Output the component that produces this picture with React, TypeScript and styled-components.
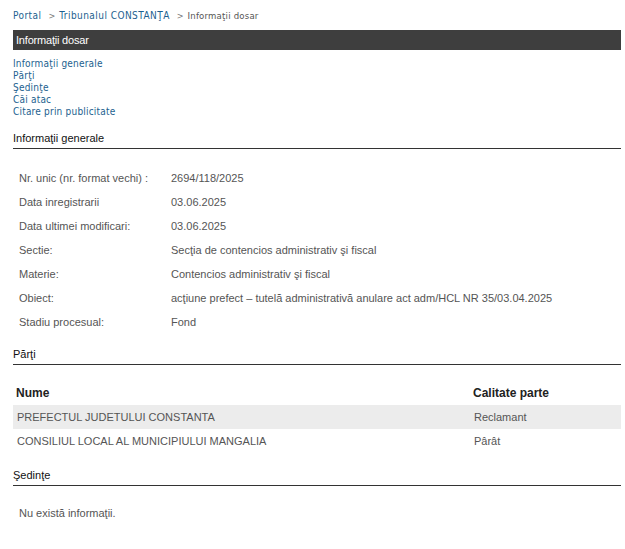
import styled, { createGlobalStyle } from 'styled-components';

const GlobalStyle = createGlobalStyle`
  body {
    margin: 0;
    background: #fff;
    font-family: "Liberation Sans", Arial, sans-serif;
  }
`;

const Page = styled.div`
  width: 608px;
  padding: 9px 0 20px 13px;
`;

const Breadcrumb = styled.div`
  font-family: "DejaVu Sans Condensed", "DejaVu Sans", Verdana, sans-serif;
  font-size: 10px;
  color: #555;
  height: 14px;
  line-height: 14px;
  margin-bottom: 7px;
  white-space: nowrap;
`;

const Crumb = styled.a`
  color: #1d5f8f;
  text-decoration: none;
  letter-spacing: 0.45px;
`;

const Current = styled.span`
  font-size: 9.5px;
  letter-spacing: 0.2px;
  color: #555;
`;

const Sep = styled.span`
  margin: 0 4px 0 7px;
  font-size: 9px;
  color: #777;
`;

const TitleBar = styled.div`
  background: #3e3e3e;
  color: #fff;
  height: 20px;
  line-height: 20px;
  padding-left: 3px;
  font-size: 11px;
  letter-spacing: -0.2px;
`;

const NavList = styled.ul`
  list-style: none;
  margin: 8px 0 0;
  padding: 0;
  font-family: "DejaVu Sans Condensed", "DejaVu Sans", Verdana, sans-serif;
  font-size: 10px;
  letter-spacing: 0.2px;
  line-height: 12px;
`;

const NavLink = styled.a`
  color: #1d5f8f;
  text-decoration: none;
`;

const SectionTitle = styled.div<{ $top: number }>`
  margin-top: ${(p) => p.$top}px;
  font-size: 11px;
  color: #111;
  padding-bottom: 3px;
  border-bottom: 1px solid #333;
  line-height: 14px;
`;

const InfoTable = styled.div`
  display: grid;
  grid-template-columns: 152px 1fr;
  margin-top: 17px;
  padding-left: 6px;
  font-size: 11px;
  color: #555;
`;

const InfoCell = styled.div`
  height: 24px;
  line-height: 24px;
  white-space: nowrap;
`;

const PartyTable = styled.div`
  margin-top: 16px;
  font-size: 11px;
`;

const PartyRow = styled.div<{ $shaded?: boolean; $head?: boolean }>`
  display: grid;
  grid-template-columns: 457px 1fr;
  height: 24px;
  line-height: 24px;
  background: ${(p) => (p.$shaded ? '#ececec' : 'transparent')};
  color: ${(p) => (p.$head ? '#222' : '#555')};
  font-weight: ${(p) => (p.$head ? 'bold' : 'normal')};
  font-size: ${(p) => (p.$head ? '12px' : '11px')};
  padding-left: ${(p) => (p.$head ? '3px' : '4px')};
`;

const PartyCell = styled.div`
  white-space: nowrap;
`;

const Empty = styled.div`
  margin-top: 15px;
  padding-left: 6px;
  font-size: 11px;
  color: #555;
  line-height: 24px;
`;

const info: [string, string][] = [
  ['Nr. unic (nr. format vechi) :', '2694/118/2025'],
  ['Data inregistrarii', '03.06.2025'],
  ['Data ultimei modificari:', '03.06.2025'],
  ['Sectie:', 'Secţia de contencios administrativ şi fiscal'],
  ['Materie:', 'Contencios administrativ şi fiscal'],
  ['Obiect:', 'acţiune prefect – tutelă administrativă anulare act adm/HCL NR 35/03.04.2025'],
  ['Stadiu procesual:', 'Fond'],
];

const parties = [
  { name: 'PREFECTUL JUDETULUI CONSTANTA', role: 'Reclamant' },
  { name: 'CONSILIUL LOCAL AL MUNICIPIULUI MANGALIA', role: 'Pârât' },
];

const navItems = ['Informaţii generale', 'Părţi', 'Şedinţe', 'Căi atac', 'Citare prin publicitate'];

export default function App() {
  return (
    <>
      <GlobalStyle />
      <Page>
        <Breadcrumb>
          <Crumb href="#">Portal</Crumb>
          <Sep>&gt;</Sep>
          <Crumb href="#">Tribunalul CONSTANŢA</Crumb>
          <Sep>&gt;</Sep>
          <Current>Informaţii dosar</Current>
        </Breadcrumb>
        <TitleBar>Informaţii dosar</TitleBar>
        <NavList>
          {navItems.map((n) => (
            <li key={n}>
              <NavLink href="#">{n}</NavLink>
            </li>
          ))}
        </NavList>

        <SectionTitle $top={13}>Informaţii generale</SectionTitle>
        <InfoTable>
          {info.map(([k, v]) => [
            <InfoCell key={k}>{k}</InfoCell>,
            <InfoCell key={k + '-v'}>{v}</InfoCell>,
          ])}
        </InfoTable>

        <SectionTitle $top={13}>Părţi</SectionTitle>
        <PartyTable>
          <PartyRow $head>
            <PartyCell>Nume</PartyCell>
            <PartyCell>Calitate parte</PartyCell>
          </PartyRow>
          {parties.map((p, i) => (
            <PartyRow key={p.name} $shaded={i % 2 === 0}>
              <PartyCell>{p.name}</PartyCell>
              <PartyCell>{p.role}</PartyCell>
            </PartyRow>
          ))}
        </PartyTable>

        <SectionTitle $top={15}>Şedinţe</SectionTitle>
        <Empty>Nu există informaţii.</Empty>
      </Page>
    </>
  );
}
